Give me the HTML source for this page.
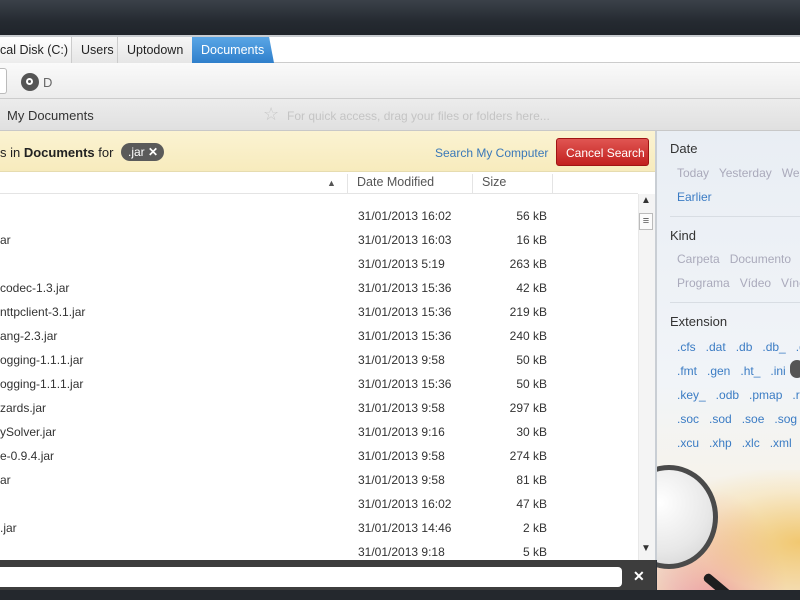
<!DOCTYPE html>
<html><head><style>
*{margin:0;padding:0;box-sizing:border-box}
body{width:800px;height:600px;overflow:hidden;position:relative;font-family:"Liberation Sans",sans-serif;background:#2c3138}
.a{position:absolute}
.t{position:absolute;white-space:nowrap}
.row{position:absolute;left:0;width:638px;height:24px;font-size:12px;color:#333}
.row span{position:absolute;top:5px}
.ext{color:#3b7cc4;font-size:12px}
</style></head><body>
<div class="a" style="left:0;top:0;width:800px;height:36px;background:linear-gradient(#3b4149,#252a31 60%,#1f242a)"></div>
<div class="a" style="left:0;top:35px;width:800px;height:2px;background:#c8ccd0"></div>
<!-- tabs -->
<div class="a" style="left:0;top:37px;width:800px;height:26px;background:#fff;border-bottom:1px solid #ccc"></div>
<div class="a" style="left:0;top:37px;width:72px;height:26px;background:linear-gradient(#fff,#ececec);border-right:1px solid #ccc"></div>
<div class="t" style="left:0;top:43px;font-size:12.5px;color:#222">cal Disk (C:)</div>
<div class="a" style="left:72px;top:37px;width:46px;height:26px;background:linear-gradient(#f6f6f6,#e6e6e6);border-right:1px solid #ccc"></div>
<div class="t" style="left:81px;top:43px;font-size:12.5px;color:#222">Users</div>
<div class="a" style="left:118px;top:37px;width:74px;height:26px;background:linear-gradient(#f6f6f6,#e6e6e6)"></div>
<div class="t" style="left:127px;top:43px;font-size:12.5px;color:#222">Uptodown</div>
<div class="a" style="left:192px;top:37px;width:82px;height:26px;background:linear-gradient(#5aa6e6,#2f7fcb);clip-path:polygon(0 0,94% 0,100% 100%,0 100%)"></div>
<div class="t" style="left:201px;top:43px;font-size:12.5px;color:#fff">Documents</div>
<!-- toolbar -->
<div class="a" style="left:0;top:63px;width:800px;height:36px;background:linear-gradient(#fafafa,#ececec);border-bottom:1px solid #ccc"></div>
<div class="a" style="left:0;top:68px;width:7px;height:26px;background:#fff;border:1px solid #bbb;border-left:none;border-radius:0 3px 3px 0"></div>
<div class="a" style="left:21px;top:73px;width:18px;height:18px;border-radius:50%;background:#555"></div>
<div class="a" style="left:26px;top:78px;width:7px;height:7px;border-radius:50%;border:2px solid #fff"></div>
<div class="t" style="left:43px;top:75px;font-size:13px;color:#666">D</div>
<!-- breadcrumb -->
<div class="a" style="left:0;top:99px;width:800px;height:32px;background:linear-gradient(#ececec,#e0e0e0);border-bottom:1px solid #c8c8c8"></div>
<div class="t" style="left:7px;top:108px;font-size:13px;color:#333">My Documents</div>
<div class="t" style="left:263px;top:104px;font-size:18px;color:#c8c8c8">☆</div>
<div class="t" style="left:287px;top:109px;font-size:12px;color:#c4c4c4">For quick access, drag your files or folders here...</div>
<!-- yellow -->
<div class="a" style="left:0;top:131px;width:656px;height:41px;background:linear-gradient(#fbf3d2,#f7ebbd);border-bottom:1px solid #e6dcb0"></div>
<div class="t" style="left:0;top:145px;font-size:13px;color:#222">s in <b>Documents</b> for</div>
<div class="a" style="left:121px;top:143px;width:43px;height:18px;border-radius:9px;background:#5a5a5a"></div>
<div class="t" style="left:128px;top:145px;font-size:12px;color:#fff">.jar <b>✕</b></div>
<div class="t" style="left:435px;top:146px;font-size:12px;color:#3a78b8">Search My Computer</div>
<div class="a" style="left:556px;top:138px;width:93px;height:28px;border-radius:3px;background:linear-gradient(#e05552,#c2201e);border:1px solid #a01414"></div>
<div class="t" style="left:566px;top:146px;font-size:12px;color:#fff">Cancel Search</div>
<!-- list -->
<div class="a" style="left:0;top:172px;width:656px;height:388px;background:#fff"></div>
<div class="a" style="left:0;top:193px;width:638px;height:1px;background:#e4e4e4"></div>
<div class="t" style="left:327px;top:178px;font-size:9px;color:#555">▲</div>
<div class="a" style="left:347px;top:174px;width:1px;height:19px;background:#e4e4e4"></div>
<div class="a" style="left:472px;top:174px;width:1px;height:19px;background:#e4e4e4"></div>
<div class="a" style="left:552px;top:174px;width:1px;height:19px;background:#e4e4e4"></div>
<div class="t" style="left:357px;top:175px;font-size:12.5px;color:#555">Date Modified</div>
<div class="t" style="left:482px;top:175px;font-size:12.5px;color:#555">Size</div>
<div class="a" style="left:638px;top:194px;width:17px;height:366px;background:#f4f4f4;border-left:1px solid #e8e8e8"></div>
<div class="t" style="left:641px;top:195px;font-size:10px;color:#333">▲</div>
<div class="a" style="left:639px;top:213px;width:14px;height:17px;background:#fbfbfb;border:1px solid #bbb;font-size:11px;line-height:14px;text-align:center;color:#555">≡</div>
<div class="t" style="left:641px;top:543px;font-size:10px;color:#333">▼</div>
<div class="a" style="left:655px;top:131px;width:2px;height:429px;background:#c9ced4"></div>

<div class="row" style="top:204px"><span style="left:0"></span><span style="left:358px">31/01/2013 16:02</span><span style="right:91px">56 kB</span></div>
<div class="row" style="top:228px"><span style="left:0">ar</span><span style="left:358px">31/01/2013 16:03</span><span style="right:91px">16 kB</span></div>
<div class="row" style="top:252px"><span style="left:358px">31/01/2013 5:19</span><span style="right:91px">263 kB</span></div>
<div class="row" style="top:276px"><span style="left:0">codec-1.3.jar</span><span style="left:358px">31/01/2013 15:36</span><span style="right:91px">42 kB</span></div>
<div class="row" style="top:300px"><span style="left:0">nttpclient-3.1.jar</span><span style="left:358px">31/01/2013 15:36</span><span style="right:91px">219 kB</span></div>
<div class="row" style="top:324px"><span style="left:0">ang-2.3.jar</span><span style="left:358px">31/01/2013 15:36</span><span style="right:91px">240 kB</span></div>
<div class="row" style="top:348px"><span style="left:0">ogging-1.1.1.jar</span><span style="left:358px">31/01/2013 9:58</span><span style="right:91px">50 kB</span></div>
<div class="row" style="top:372px"><span style="left:0">ogging-1.1.1.jar</span><span style="left:358px">31/01/2013 15:36</span><span style="right:91px">50 kB</span></div>
<div class="row" style="top:396px"><span style="left:0">zards.jar</span><span style="left:358px">31/01/2013 9:58</span><span style="right:91px">297 kB</span></div>
<div class="row" style="top:420px"><span style="left:0">ySolver.jar</span><span style="left:358px">31/01/2013 9:16</span><span style="right:91px">30 kB</span></div>
<div class="row" style="top:444px"><span style="left:0">e-0.9.4.jar</span><span style="left:358px">31/01/2013 9:58</span><span style="right:91px">274 kB</span></div>
<div class="row" style="top:468px"><span style="left:0">ar</span><span style="left:358px">31/01/2013 9:58</span><span style="right:91px">81 kB</span></div>
<div class="row" style="top:492px"><span style="left:358px">31/01/2013 16:02</span><span style="right:91px">47 kB</span></div>
<div class="row" style="top:516px"><span style="left:0">.jar</span><span style="left:358px">31/01/2013 14:46</span><span style="right:91px">2 kB</span></div>
<div class="row" style="top:540px"><span style="left:358px">31/01/2013 9:18</span><span style="right:91px">5 kB</span></div>

<!-- bottom bar -->
<div class="a" style="left:0;top:560px;width:656px;height:30px;background:#3d3d3d"></div>
<div class="a" style="left:0;top:567px;width:622px;height:20px;background:#fff;border-radius:0 4px 4px 0"></div>
<div class="t" style="left:633px;top:568px;font-size:14px;color:#fff;font-weight:bold">✕</div>
<div class="a" style="left:0;top:590px;width:800px;height:10px;background:#24282d"></div>

<!-- right panel -->
<div class="a" style="left:657px;top:131px;width:143px;height:459px;overflow:hidden;background:linear-gradient(#e9eef4,#f1f4f8 55%,#f6f3ec 75%,#f2dcc0)">
  <div class="a" style="left:0;top:339px;width:143px;height:120px;background:radial-gradient(ellipse at 100% 60%,rgba(240,190,80,.75),rgba(250,220,150,.35) 50%,transparent 75%),radial-gradient(ellipse at 40% 110%,rgba(230,110,150,.6),transparent 60%)"></div>
  <div class="a" style="left:-37px;top:334px;width:98px;height:104px;border-radius:50%;border:5px solid #4a4a4a;background:radial-gradient(circle at 40% 35%,#fff,#e8e8e8 60%,#cfcfcf)"></div>
  <div class="a" style="left:48px;top:440px;width:48px;height:9px;background:#1e1e1e;transform:rotate(40deg);transform-origin:0 50%;border-radius:4px"></div>
</div>
<div class="t" style="left:670px;top:141px;font-size:13px;color:#333">Date</div>
<div class="t" style="left:677px;top:166px;font-size:12px;color:#aab"><span>Today</span>&nbsp;&nbsp; <span>Yesterday</span>&nbsp;&nbsp; Wee</div>
<div class="t ext" style="left:677px;top:190px">Earlier</div>
<div class="a" style="left:670px;top:216px;width:130px;height:1px;background:#d8dde3"></div>
<div class="t" style="left:670px;top:228px;font-size:13px;color:#333">Kind</div>
<div class="t" style="left:677px;top:252px;font-size:12px;color:#aab">Carpeta&nbsp;&nbsp; Documento</div>
<div class="t" style="left:677px;top:276px;font-size:12px;color:#aab">Programa&nbsp;&nbsp; Vídeo&nbsp;&nbsp; Vínc</div>
<div class="a" style="left:670px;top:302px;width:130px;height:1px;background:#d8dde3"></div>
<div class="t" style="left:670px;top:314px;font-size:13px;color:#333">Extension</div>
<div class="t ext" style="left:677px;top:340px">.cfs&nbsp;&nbsp; .dat&nbsp;&nbsp; .db&nbsp;&nbsp; .db_&nbsp;&nbsp; .d</div>
<div class="t ext" style="left:677px;top:364px">.fmt&nbsp;&nbsp; .gen&nbsp;&nbsp; .ht_&nbsp;&nbsp; .ini</div>
<div class="a" style="left:790px;top:360px;width:14px;height:18px;border-radius:8px;background:#555"></div>
<div class="t ext" style="left:677px;top:388px">.key_&nbsp;&nbsp; .odb&nbsp;&nbsp; .pmap&nbsp;&nbsp; .ro</div>
<div class="t ext" style="left:677px;top:412px">.soc&nbsp;&nbsp; .sod&nbsp;&nbsp; .soe&nbsp;&nbsp; .sog</div>
<div class="t ext" style="left:677px;top:436px">.xcu&nbsp;&nbsp; .xhp&nbsp;&nbsp; .xlc&nbsp;&nbsp; .xml</div>
</body></html>
